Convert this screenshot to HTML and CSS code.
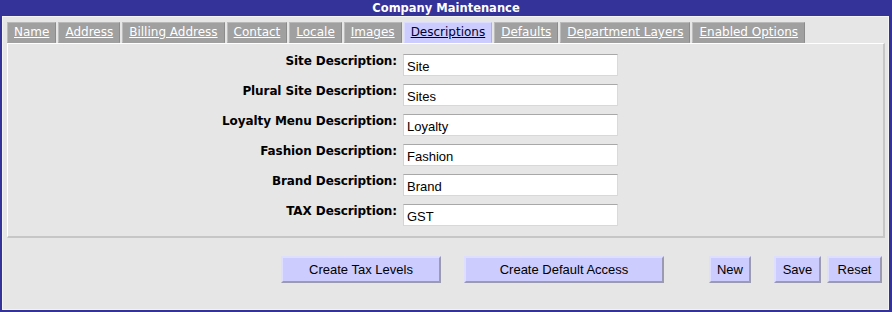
FILE: index.html
```html
<!DOCTYPE html>
<html>
<head>
<meta charset="utf-8">
<title>Company Maintenance</title>
<link rel="stylesheet" href="styles.css">
</head>
<body>
<div class="window">
  <div class="title">Company Maintenance</div>
  <div class="content">
    <div class="tabs">
      <a class="tab" href="#">Name</a>
      <a class="tab" href="#">Address</a>
      <a class="tab" href="#">Billing Address</a>
      <a class="tab" href="#">Contact</a>
      <a class="tab" href="#">Locale</a>
      <a class="tab" href="#">Images</a>
      <a class="tab active" href="#">Descriptions</a>
      <a class="tab" href="#">Defaults</a>
      <a class="tab" href="#">Department Layers</a>
      <a class="tab" href="#">Enabled Options</a>
    </div>
    <div class="panel">
      <div class="form">
        <label class="label">Site Description:</label>
        <input class="field" type="text" value="Site">
        <label class="label">Plural Site Description:</label>
        <input class="field" type="text" value="Sites">
        <label class="label">Loyalty Menu Description:</label>
        <input class="field" type="text" value="Loyalty">
        <label class="label">Fashion Description:</label>
        <input class="field" type="text" value="Fashion">
        <label class="label">Brand Description:</label>
        <input class="field" type="text" value="Brand">
        <label class="label">TAX Description:</label>
        <input class="field" type="text" value="GST">
      </div>
    </div>
    <div class="actions">
      <button class="btn btn-tax">Create Tax Levels</button>
      <button class="btn btn-access">Create Default Access</button>
      <button class="btn btn-new">New</button>
      <button class="btn btn-save">Save</button>
      <button class="btn btn-reset">Reset</button>
    </div>
  </div>
</div>
</body>
</html>
```
FILE: styles.css
```css
html, body {
  margin: 0;
  padding: 0;
}
body {
  width: 892px;
  height: 312px;
  background: #333399;
  overflow: hidden;
}
.window {
  display: flex;
  flex-direction: column;
  height: 312px;
}
.title {
  height: 16px;
  line-height: 16px;
  text-align: center;
  color: #ffffff;
  font-family: "DejaVu Sans", sans-serif;
  font-weight: bold;
  font-size: 11.5px;
}
.content {
  flex: 1;
  margin: 0 3px 2px 2px;
  background: #e6e6e6;
  border: 1px solid #f4f4f4;
  padding: 5px 3px 0 4px;
  display: flex;
  flex-direction: column;
}
.tabs {
  display: flex;
  gap: 2px;
  height: 21px;
}
.tab {
  display: block;
  box-sizing: border-box;
  height: 21px;
  line-height: 19px;
  padding: 0 6px;
  background: #a0a0a0;
  border: 1px solid;
  border-color: #b8b8b8 #8c8c8c #a0a0a0 #bcbcbc;
  color: #ffffff;
  font-family: "DejaVu Sans", sans-serif;
  font-size: 12px;
  text-decoration: underline;
  white-space: nowrap;
}
.tab.active {
  background: #ccccff;
  border-color: #dcdcff #b0b0d8 #ccccff #dcdcff;
  color: #000033;
}
.panel {
  box-sizing: border-box;
  width: 878px;
  height: 195px;
  border-style: solid;
  border-width: 1px 2px 2px 1px;
  border-color: #ffffff #c6c6c6 #c6c6c6 #ffffff;
  padding: 10px 0 10px 0;
}
.form {
  display: grid;
  grid-template-columns: 389px 215px;
  grid-auto-rows: 22px;
  column-gap: 6px;
  row-gap: 8px;
}
.label {
  text-align: right;
  font-family: "DejaVu Sans", sans-serif;
  font-weight: bold;
  font-size: 12px;
  letter-spacing: -0.1px;
  color: #000000;
  line-height: 16px;
  margin-top: -1px;
}
.field {
  box-sizing: border-box;
  width: 215px;
  height: 22px;
  margin: 0;
  padding: 2px 3px 0 3px;
  background: #ffffff;
  border: 1px solid;
  border-color: #a8a8a8 #dadada #d8d8d8 #d4d4d4;
  font-family: "Liberation Sans", Arial, sans-serif;
  font-size: 13px;
  color: #000000;
  outline: none;
}
.actions {
  display: flex;
  margin-top: 18px;
  padding-left: 274px;
}
.btn {
  box-sizing: border-box;
  height: 27px;
  margin: 0;
  padding: 0;
  background: #ccccff;
  border: 2px solid;
  border-color: #dedeff #9a9ab0 #9a9ab0 #dedeff;
  font-family: "Liberation Sans", Arial, sans-serif;
  font-size: 13px;
  color: #000000;
}
.btn-tax { width: 160px; }
.btn-access { width: 200px; margin-left: 23px; }
.btn-new { width: 42px; margin-left: 45px; }
.btn-save { width: 47px; margin-left: 23px; }
.btn-reset { width: 55px; margin-left: 6px; }
```
